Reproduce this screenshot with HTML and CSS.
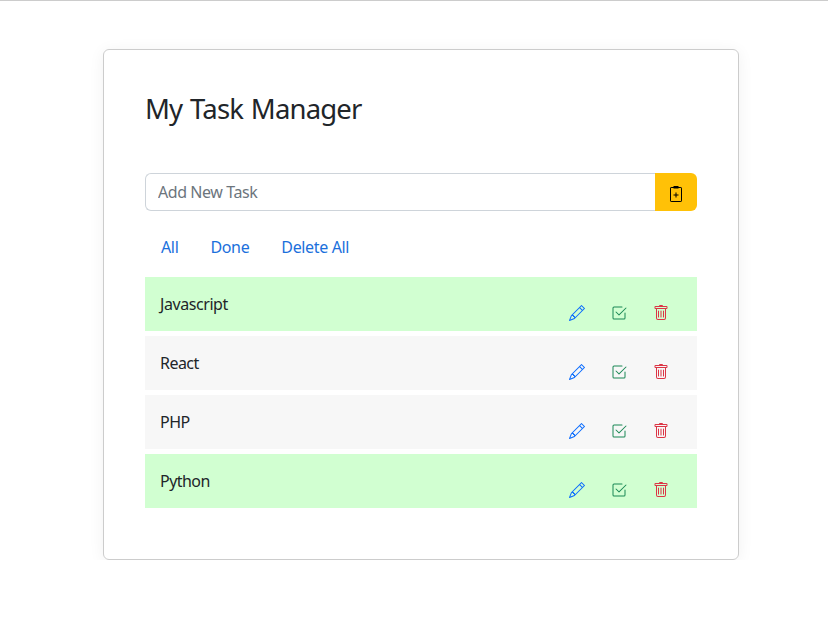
FILE: index.html
```html
<!DOCTYPE html>
<html lang="en">
<head>
<meta charset="utf-8">
<title>My Task Manager</title>
<link rel="stylesheet" href="styles.css">
</head>
<body>
<svg width="0" height="0" class="sprite" aria-hidden="true">
  <symbol id="pencil" viewBox="0 0 16 16"><path d="M12.146.146a.5.5 0 0 1 .708 0l3 3a.5.5 0 0 1 0 .708l-10 10a.5.5 0 0 1-.168.11l-5 2a.5.5 0 0 1-.65-.65l2-5a.5.5 0 0 1 .11-.168l10-10zM11.207 2.5 13.5 4.793 14.793 3.5 12.5 1.207 11.207 2.5zm1.586 3L10.5 3.207 4 9.707V10h.5a.5.5 0 0 1 .5.5v.5h.5a.5.5 0 0 1 .5.5v.5h.293l6.5-6.5zm-9.761 5.175-.106.106-1.528 3.821 3.821-1.528.106-.106A.5.5 0 0 1 5 12.5V12h-.5a.5.5 0 0 1-.5-.5V11h-.5a.5.5 0 0 1-.468-.325z"/></symbol>
  <symbol id="check" viewBox="0 0 16 16"><path d="M3 14.5A1.5 1.5 0 0 1 1.500 13V3A1.500 1.500 0 0 1 3 1.500h8a.5.5 0 0 1 0 1H3a.5.5 0 0 0-.5.5v10a.5.5 0 0 0 .5.5h10a.5.5 0 0 0 .5-.5V8a.5.5 0 0 1 1 0v5a1.500 1.500 0 0 1-1.500 1.500H3z"/><path d="m8.354 10.354 7-7a.5.5 0 0 0-.708-.708L8 9.293 5.354 6.646a.5.5 0 1 0-.708.708l3 3a.5.5 0 0 0 .708 0z"/></symbol>
  <symbol id="trash" viewBox="0 0 16 16"><path d="M5.5 5.5A.5.5 0 0 1 6 6v6a.5.5 0 0 1-1 0V6a.5.5 0 0 1 .5-.5zm2.5 0a.5.5 0 0 1 .5.5v6a.5.5 0 0 1-1 0V6a.5.5 0 0 1 .5-.5zm3 .5a.5.5 0 0 0-1 0v6a.5.5 0 0 0 1 0V6z"/><path fill-rule="evenodd" d="M14.5 3a1 1 0 0 1-1 1H13v9a2 2 0 0 1-2 2H5a2 2 0 0 1-2-2V4h-.5a1 1 0 0 1-1-1V2a1 1 0 0 1 1-1H6a1 1 0 0 1 1-1h2a1 1 0 0 1 1 1h3.500a1 1 0 0 1 1 1v1zM4.118 4 4 4.059V13a1 1 0 0 0 1 1h6a1 1 0 0 0 1-1V4.059L11.882 4H4.118zM2.500 3V2h11v1h-11z"/></symbol>
  <symbol id="clipboard" viewBox="0 0 16 16"><rect x="2.5" y="1.5" width="11" height="14" rx=".6" fill="none" stroke="currentColor"/><path d="M5.5 0h5v2.500h-5zM7.500 6.500h1v2h2v1h-2v2h-1v-2h-2v-1h2z"/></symbol>
</svg>
<main class="card">
  <h1>My Task Manager</h1>
  <form class="add">
    <input type="text" placeholder="Add New Task" aria-label="Add New Task">
    <button type="button" aria-label="Add"><svg><use href="#clipboard"/></svg></button>
  </form>
  <nav><a>All</a><a>Done</a><a>Delete All</a></nav>
  <ul>
    <li class="complete"><span>Javascript</span><div class="actions"><svg class="edit"><use href="#pencil"/></svg><svg class="ok"><use href="#check"/></svg><svg class="remove"><use href="#trash"/></svg></div></li>
    <li><span>React</span><div class="actions"><svg class="edit"><use href="#pencil"/></svg><svg class="ok"><use href="#check"/></svg><svg class="remove"><use href="#trash"/></svg></div></li>
    <li><span>PHP</span><div class="actions"><svg class="edit"><use href="#pencil"/></svg><svg class="ok"><use href="#check"/></svg><svg class="remove"><use href="#trash"/></svg></div></li>
    <li class="complete"><span>Python</span><div class="actions"><svg class="edit"><use href="#pencil"/></svg><svg class="ok"><use href="#check"/></svg><svg class="remove"><use href="#trash"/></svg></div></li>
  </ul>
</main>
</body>
</html>
```
FILE: styles.css
```css
* { box-sizing: border-box; }
body { margin: 0; padding-top: 48px; border-top: 1px solid #ccc; background: #fff; color: #212529; font: 16px/24px "Noto Sans", sans-serif; }
.sprite { display: none; }
.card { width: 636px; height: 511px; margin-left: 103px; padding: 41px 41px 40px; border: 1px solid #ccc; border-radius: 6px; box-shadow: 0 2px 16px rgba(0,0,0,.06); }
h1 { margin: 0 0 46px; font-size: 27.5px; line-height: 36px; font-weight: 400; letter-spacing: -.85px; word-spacing: 1.5px; }
.add { display: flex; height: 38px; }
input { flex: 1; min-width: 0; padding: 6px 12px; border: 1px solid #ced4da; border-right: 0; border-radius: 6px 0 0 6px; font: inherit; letter-spacing: -.43px; }
input::placeholder { color: #6c757d; opacity: 1; }
button { display: flex; align-items: center; justify-content: center; width: 42px; padding: 4px 0 0; border: 0; border-radius: 0 6px 6px 0; background: #ffc107; color: #000; }
svg { width: 16px; height: 16px; fill: currentColor; }
nav { display: flex; gap: 32px; height: 40px; margin: 16px 0 10px; padding: 8px 16px; color: #1b70dc; letter-spacing: -.35px; }
ul { display: grid; gap: 5px; margin: 0; padding: 0; list-style: none; }
li { display: flex; align-items: center; justify-content: space-between; height: 54px; padding: 0 28px 0 15px; background: #f7f7f7; letter-spacing: -.55px; }
li:first-child { letter-spacing: -.43px; }
.complete { background: #d1ffd1; }
.actions { display: flex; gap: 26px; padding-top: 17px; }
.edit { color: #0d6efd; }
.ok { color: #198754; }
.remove { color: #dc3545; }
```
